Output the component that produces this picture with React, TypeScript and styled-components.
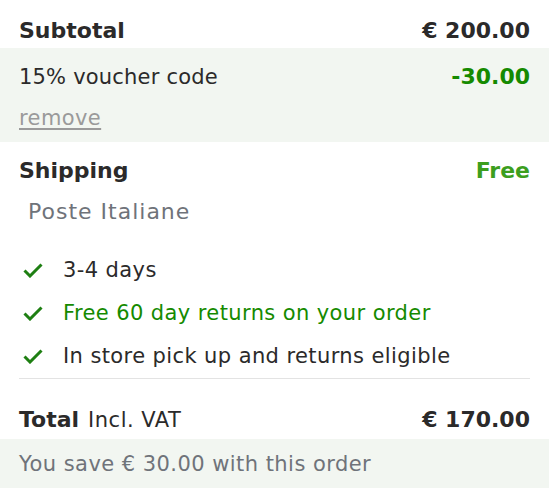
import React from 'react';
import styled, { createGlobalStyle } from 'styled-components';

const GlobalStyle = createGlobalStyle`
  html, body {
    margin: 0;
    padding: 0;
    background: #ffffff;
  }
  body {
    font-family: 'DejaVu Sans', Inter, sans-serif;
    color: #2b2a2a;
  }
`;

const Summary = styled.div`
  width: 549px;
`;

const Row = styled.div`
  display: flex;
  justify-content: space-between;
  align-items: baseline;
`;

const HeaderRow = styled(Row)`
  padding: 17px 19px 3px;
`;

const Heading = styled.span`
  font-size: 22px;
  line-height: 28px;
  font-weight: 700;
`;

const Amount = styled.span<{ $green?: boolean; $light?: boolean }>`
  font-size: 22px;
  line-height: 28px;
  font-weight: 700;
  color: ${(p) => (p.$light ? '#3c9e1e' : p.$green ? '#158a00' : '#2b2a2a')};
`;

const Tinted = styled.div`
  background: #f2f6f1;
  padding: 15px 19px 11px;
`;

const Body = styled.span`
  font-size: 21px;
  line-height: 26px;
  letter-spacing: 0.2px;
`;

const RemoveLink = styled.a`
  display: inline-block;
  margin-top: 14px;
  font-size: 21px;
  line-height: 26px;
  letter-spacing: 0.4px;
  color: #9a9a9a;
  text-decoration: underline;
  text-underline-offset: 3px;
`;

const Shipping = styled.div`
  padding: 15px 19px 0;
`;

const Carrier = styled.div`
  margin-top: 14px;
  padding-left: 9px;
  font-size: 22px;
  line-height: 26px;
  letter-spacing: 1px;
  color: #6f737a;
`;

const Perks = styled.ul`
  list-style: none;
  margin: 32px 0 0;
  padding: 0 0 9px;
  display: flex;
  flex-direction: column;
  gap: 17px;
  border-bottom: 1px solid #e3e3e3;
`;

const Perk = styled.li<{ $green?: boolean }>`
  display: flex;
  align-items: center;
  gap: 20px;
  padding-left: 4px;
  font-size: 21px;
  line-height: 26px;
  letter-spacing: 0.4px;
  color: ${(p) => (p.$green ? '#158a00' : '#2b2a2a')};
`;

const TotalRow = styled(Row)`
  padding: 27px 19px 5px;
`;

const TotalLabel = styled.span`
  display: flex;
  align-items: baseline;
  gap: 9px;
`;

const Note = styled.span`
  font-size: 21px;
  line-height: 26px;
  letter-spacing: 0.5px;
`;

const Savings = styled.div`
  background: #f2f6f1;
  padding: 12px 19px 14px;
  font-size: 21px;
  line-height: 26px;
  letter-spacing: 0.45px;
  color: #6f737a;
`;

const Check = () => (
  <svg width="20" height="15" viewBox="0 0 20 15">
    <polyline points="1.5,7.5 7,13 18.5,1.5" fill="none" stroke="#1e7f12" strokeWidth="3" />
  </svg>
);

const perks = [
  { text: '3-4 days' },
  { text: 'Free 60 day returns on your order', green: true },
  { text: 'In store pick up and returns eligible' },
];

export default function App() {
  return (
    <>
      <GlobalStyle />
      <Summary>
        <HeaderRow>
          <Heading>Subtotal</Heading>
          <Amount>€ 200.00</Amount>
        </HeaderRow>
        <Tinted>
          <Row>
            <Body>15% voucher code</Body>
            <Amount $green>-30.00</Amount>
          </Row>
          <RemoveLink href="#">remove</RemoveLink>
        </Tinted>
        <Shipping>
          <Row>
            <Heading>Shipping</Heading>
            <Amount $light>Free</Amount>
          </Row>
          <Carrier>Poste Italiane</Carrier>
          <Perks>
            {perks.map((p) => (
              <Perk key={p.text} $green={p.green}>
                <Check />
                {p.text}
              </Perk>
            ))}
          </Perks>
        </Shipping>
        <TotalRow>
          <TotalLabel>
            <Heading>Total</Heading>
            <Note>Incl. VAT</Note>
          </TotalLabel>
          <Amount>€ 170.00</Amount>
        </TotalRow>
        <Savings>You save € 30.00 with this order</Savings>
      </Summary>
    </>
  );
}
